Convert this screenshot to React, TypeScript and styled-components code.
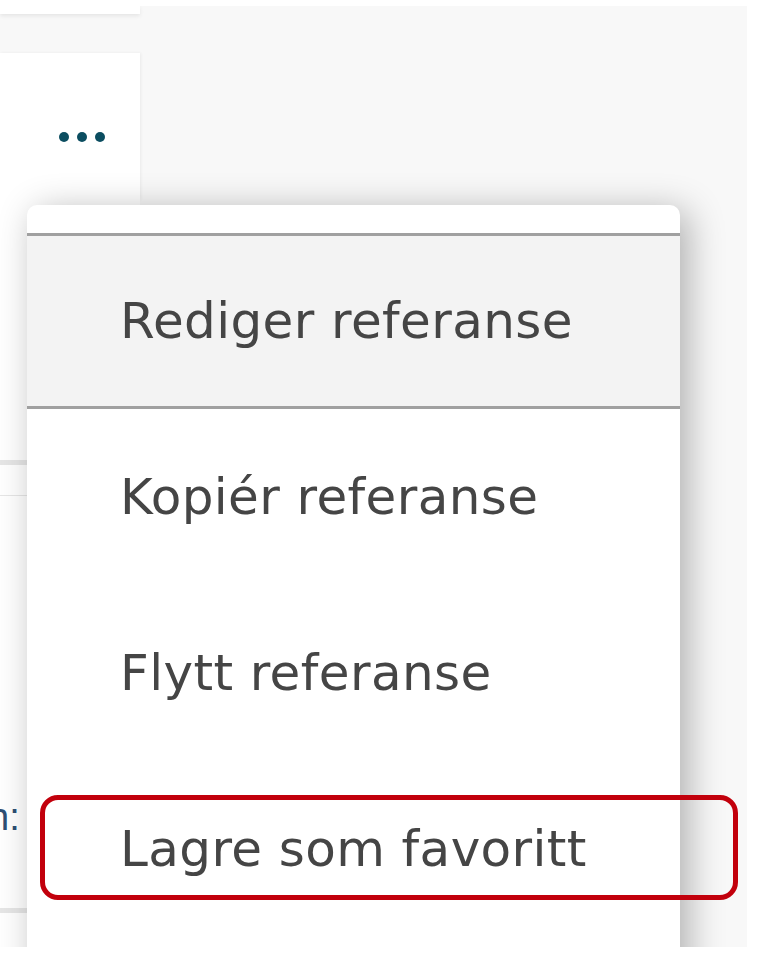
import React from "react";
import styled, { createGlobalStyle } from "styled-components";

const GlobalStyle = createGlobalStyle`
  html, body {
    margin: 0;
    padding: 0;
    background: #ffffff;
  }
  body {
    font-family: "DejaVu Sans", "Liberation Sans", sans-serif;
  }
`;

const Page = styled.div`
  width: 758px;
  height: 960px;
  padding: 6px 11px 13px 0;
  box-sizing: border-box;
  background: #ffffff;
`;

const Frame = styled.div`
  position: relative;
  width: 747px;
  height: 941px;
  background: #f8f8f8;
  overflow: hidden;
  display: flex;
  flex-direction: column;
`;

const TopRow = styled.div`
  height: 47px;
  flex: none;
`;

const CardTail = styled.div`
  width: 140px;
  height: 8px;
  background: #ffffff;
  box-shadow: 0 2px 4px rgba(0, 0, 0, 0.08);
`;

const ActionRow = styled.div`
  height: 147px;
  flex: none;
  display: flex;
`;

const ActionCell = styled.div`
  width: 140px;
  background: #ffffff;
  box-shadow: 1px 0 3px rgba(0, 0, 0, 0.06);
  display: flex;
  align-items: center;
  justify-content: center;
  padding: 20px 0 0 24px;
  box-sizing: border-box;
`;

const Dots = styled.div`
  display: flex;
  gap: 8px;
`;

const Dot = styled.span`
  width: 10px;
  height: 10px;
  border-radius: 50%;
  background: #0b4d60;
`;

const Table = styled.div`
  flex: 1;
  width: 140px;
  background: #ffffff;
  display: flex;
  flex-direction: column;
`;

const TableRow = styled.div<{ $h: number; $line: number; $pad?: number }>`
  height: ${(p) => p.$h}px;
  flex: none;
  box-sizing: border-box;
  border-bottom: ${(p) => p.$line}px solid #e6e6e6;
  display: flex;
  align-items: flex-end;
  padding-bottom: ${(p) => p.$pad ?? 0}px;
`;

const CutLabel = styled.span`
  margin-left: -12px;
  font-family: "Liberation Sans", sans-serif;
  font-size: 38px;
  line-height: 1;
  color: #2d4f74;
`;

const Menu = styled.div`
  position: absolute;
  left: 27px;
  top: 199px;
  width: 653px;
  height: 800px;
  background: #ffffff;
  border-radius: 10px 10px 0 0;
  box-shadow: 8px 6px 36px rgba(0, 0, 0, 0.3);
  display: flex;
  flex-direction: column;
`;

const MenuHead = styled.div`
  height: 28px;
  flex: none;
`;

const MenuItem = styled.div<{ $active?: boolean }>`
  height: 170px;
  flex: none;
  display: flex;
  align-items: center;
  padding-left: 93px;
  border-top: 3px solid ${(p) => (p.$active ? "#a0a0a0" : "transparent")};
  border-bottom: 3px solid ${(p) => (p.$active ? "#a0a0a0" : "transparent")};
  background: ${(p) => (p.$active ? "#f3f3f3" : "#ffffff")};
  font-size: 50px;
  letter-spacing: 0.4px;
  color: #454545;
`;

const Callout = styled.div`
  position: absolute;
  left: 40px;
  top: 789px;
  width: 698px;
  height: 105px;
  box-sizing: border-box;
  border: 5px solid #c2000c;
  border-radius: 18px;
  pointer-events: none;
`;

export default function App() {
  const items = [
    "Rediger referanse",
    "Kopiér referanse",
    "Flytt referanse",
    "Lagre som favoritt",
  ];
  return (
    <>
      <GlobalStyle />
      <Page>
        <Frame>
          <TopRow>
            <CardTail />
          </TopRow>
          <ActionRow>
            <ActionCell>
              <Dots>
                <Dot />
                <Dot />
                <Dot />
              </Dots>
            </ActionCell>
          </ActionRow>
          <Table>
            <TableRow $h={265} $line={5} />
            <TableRow $h={31} $line={1} />
            <TableRow $h={417} $line={5} $pad={72}>
              <CutLabel>n:</CutLabel>
            </TableRow>
          </Table>
          <Menu>
            <MenuHead />
            {items.map((t, i) => (
              <MenuItem key={t} $active={i === 0}>
                {t}
              </MenuItem>
            ))}
          </Menu>
          <Callout />
        </Frame>
      </Page>
    </>
  );
}
